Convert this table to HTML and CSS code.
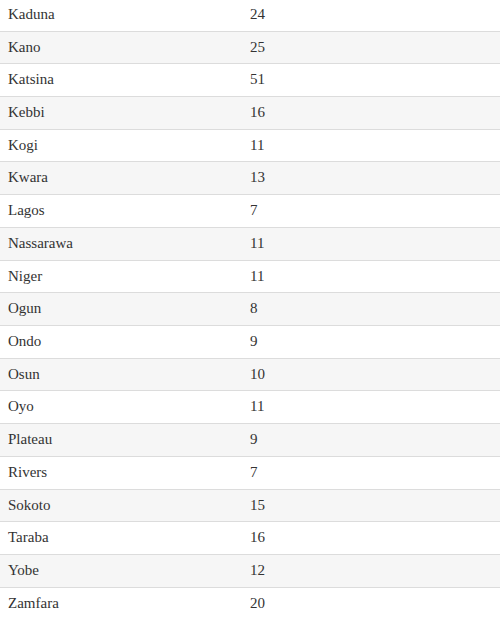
FILE: index.html
```html
<!DOCTYPE html>
<html>
<head>
<meta charset="utf-8">
<link rel="stylesheet" href="styles.css">
</head>
<body>
<table class="data">
<tbody>
<tr><td>Kaduna</td><td>24</td></tr>
<tr><td>Kano</td><td>25</td></tr>
<tr><td>Katsina</td><td>51</td></tr>
<tr><td>Kebbi</td><td>16</td></tr>
<tr><td>Kogi</td><td>11</td></tr>
<tr><td>Kwara</td><td>13</td></tr>
<tr><td>Lagos</td><td>7</td></tr>
<tr><td>Nassarawa</td><td>11</td></tr>
<tr><td>Niger</td><td>11</td></tr>
<tr><td>Ogun</td><td>8</td></tr>
<tr><td>Ondo</td><td>9</td></tr>
<tr><td>Osun</td><td>10</td></tr>
<tr><td>Oyo</td><td>11</td></tr>
<tr><td>Plateau</td><td>9</td></tr>
<tr><td>Rivers</td><td>7</td></tr>
<tr><td>Sokoto</td><td>15</td></tr>
<tr><td>Taraba</td><td>16</td></tr>
<tr><td>Yobe</td><td>12</td></tr>
<tr><td>Zamfara</td><td>20</td></tr>
</tbody>
</table>
</body>
</html>
```
FILE: styles.css
```css
html, body {
  margin: 0;
  padding: 0;
  background: #fff;
}
body {
  font-family: "Liberation Serif", "DejaVu Serif", serif;
  font-size: 15px;
  color: #333;
}
.data {
  width: 100%;
  border-collapse: collapse;
  margin-top: -2.2px;
}
.data td {
  padding: 5px 8px;
  line-height: 21.72px;
  border-top: 1px solid #dcdcdc;
  text-align: left;
  vertical-align: middle;
  font-variant-numeric: oldstyle-nums;
}
.data td:first-child {
  width: 226px;
}
.data tr:nth-child(even) td {
  background: #f6f6f6;
}
```
